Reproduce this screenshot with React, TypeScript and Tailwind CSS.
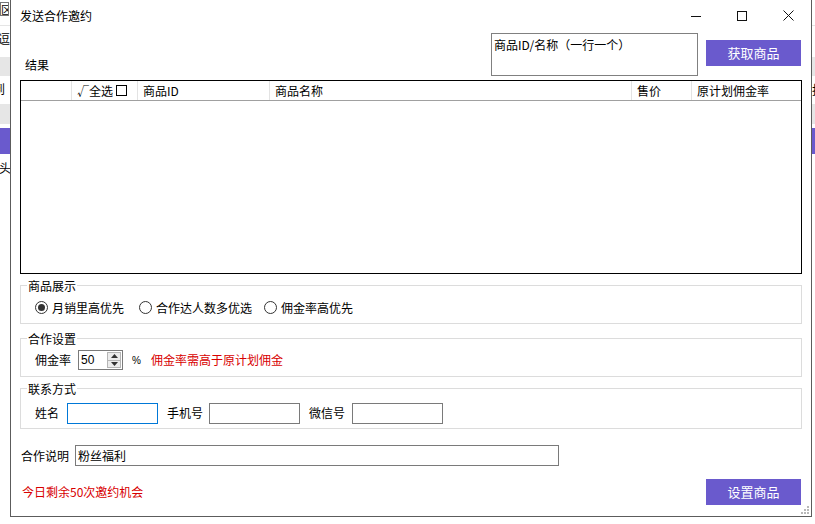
import React from 'react';

const Radio = ({ checked, label, className }: { checked?: boolean; label: string; className?: string }) => (
  <label className={`flex items-center ${className ?? ''}`}>
    <span className="flex items-center justify-center w-[13px] h-[13px] rounded-full border border-[#333333] bg-white">
      {checked && <span className="w-[7px] h-[7px] rounded-full bg-[#333333]" />}
    </span>
    <span className="ml-[4px]">{label}</span>
  </label>
);

const GroupBox = ({ title, className, children }: { title: string; className?: string; children: React.ReactNode }) => (
  <div className={`relative mx-[9px] border border-[#dcdcdc] ${className ?? ''}`}>
    <span className="absolute left-[6px] -top-[8px] px-[1px] bg-white leading-[16px]">{title}</span>
    {children}
  </div>
);

const TextBox = ({ className, value, focused }: { className?: string; value?: string; focused?: boolean }) => (
  <div
    className={`h-[21px] border bg-white pl-[2px] leading-[19px] ${focused ? 'border-[#0078d7]' : 'border-[#7a7a7a]'} ${className ?? ''}`}
  >
    {value}
  </div>
);

const columns = [
  { key: 'blank', label: '', w: 'w-[51px]' },
  { key: 'check', label: '√全选', w: 'w-[66px]' },
  { key: 'id', label: '商品ID', w: 'w-[132px]' },
  { key: 'name', label: '商品名称', w: 'w-[362px]' },
  { key: 'price', label: '售价', w: 'w-[60px]' },
  { key: 'rate', label: '原计划佣金率', w: 'flex-1' },
];

const App = (): JSX.Element => {
  return (
    <div className="relative w-[815px] h-[524px] overflow-hidden bg-white text-[12px] text-black font-['Noto_Sans_CJK_SC','Noto_Sans',sans-serif]">
      {/* window behind the dialog */}
      <div className="absolute left-0 top-[2px] w-[9px] h-[14px] border border-[#777777] text-[11px] leading-[12px] overflow-hidden">区</div>
      <div className="absolute left-0 top-[25px] w-[815px] border-t border-[#e5e5e5]" />
      <span className="absolute -left-[2px] top-[31px] leading-[16px]">逗</span>
      <div className="absolute left-0 top-[57px] w-[815px] h-[19px] bg-[#e6e6e6]" />
      <span className="absolute -left-[7px] top-[81px] leading-[16px]">到</span>
      <span className="absolute left-[812px] top-[82px] leading-[16px]">报</span>
      <div className="absolute left-0 top-[104px] w-[815px] h-[20px] bg-[#e6e6e6]" />
      <div className="absolute left-0 top-[128px] w-[815px] h-[26px] bg-[#6a5acd]" />
      <span className="absolute -left-[1px] top-[160px] leading-[16px]">头</span>

      {/* dialog */}
      <div className="absolute left-[10px] top-0 w-[802px] h-[517px] flex flex-col bg-white border-l border-r border-b border-[#5c5c5c]">
        <div className="flex items-center h-[31px] shrink-0">
          <span className="pl-[9px] leading-[16px]">发送合作邀约</span>
          <div className="ml-auto flex h-full">
            <div className="w-[46px] flex items-center justify-center">
              <svg width="10" height="10" viewBox="0 0 10 10"><path d="M0 5.5h10" stroke="#111" strokeWidth="1" /></svg>
            </div>
            <div className="w-[46px] flex items-center justify-center">
              <svg width="10" height="10" viewBox="0 0 10 10"><rect x="0.5" y="0.5" width="9" height="9" fill="none" stroke="#111" strokeWidth="1" /></svg>
            </div>
            <div className="w-[46px] flex items-center justify-center">
              <svg width="11" height="11" viewBox="0 0 11 11"><path d="M0.5 0.5l10 10M10.5 0.5l-10 10" stroke="#111" strokeWidth="1" /></svg>
            </div>
          </div>
        </div>

        <div className="flex h-[49px] shrink-0">
          <span className="ml-[14px] mt-[26px] leading-[16px]">结果</span>
          <div className="ml-auto mt-[2px] w-[207px] h-[43px] border border-[#808080] pl-[2px] pt-[3px] leading-[16px]">
            商品ID/名称（一行一个）
          </div>
          <button className="ml-[8px] mr-[10px] mt-[9px] w-[95px] h-[26px] bg-[#6a5acd] text-white text-[13px]">
            获取商品
          </button>
        </div>

        <div className="mx-[9px] h-[194px] shrink-0 border border-black flex flex-col">
          <div className="flex h-[20px] border-b border-[#a0a0a0]">
            {columns.map((c) => (
              <div key={c.key} className={`${c.w} flex items-center pl-[5px] border-r border-[#e3e3e3] last:border-r-0`}>
                {c.label}
                {c.key === 'check' && <span className="ml-[3px] w-[11px] h-[11px] border border-black" />}
              </div>
            ))}
          </div>
        </div>

        <GroupBox title="商品展示" className="mt-[11px] h-[39px] shrink-0">
          <div className="flex items-center h-full pt-[6px]">
            <Radio checked label="月销里高优先" className="ml-[14px]" />
            <Radio label="合作达人数多优选" className="ml-[15px]" />
            <Radio label="佣金率高优先" className="ml-[12px]" />
          </div>
        </GroupBox>

        <GroupBox title="合作设置" className="mt-[14px] h-[39px] shrink-0">
          <div className="flex items-center h-full pt-[5px]">
            <span className="ml-[14px]">佣金率</span>
            <div className="ml-[7px] w-[45px] h-[20px] border border-[#7a7a7a] flex">
              <span className="pl-[2px] leading-[18px] text-[12px] font-['Liberation_Sans',sans-serif]">50</span>
              <div className="ml-auto mr-[1px] my-[1px] w-[14px] flex flex-col border border-[#b5b5b5] bg-[#ececec]">
                <div className="flex-1 flex items-center justify-center border-b border-[#b5b5b5]">
                  <svg width="7" height="4" viewBox="0 0 7 4"><path d="M0 4L3.5 0L7 4Z" fill="#333" /></svg>
                </div>
                <div className="flex-1 flex items-center justify-center">
                  <svg width="7" height="4" viewBox="0 0 7 4"><path d="M0 0L3.5 4L7 0Z" fill="#333" /></svg>
                </div>
              </div>
            </div>
            <span className="ml-[9px] text-[10px] font-['Liberation_Sans',sans-serif]">%</span>
            <span className="ml-[10px] text-[#d80000]">佣金率需高于原计划佣金</span>
          </div>
        </GroupBox>

        <GroupBox title="联系方式" className="mt-[11px] h-[41px] shrink-0">
          <div className="flex items-center h-full pt-[9px]">
            <span className="ml-[14px]">姓名</span>
            <TextBox className="ml-[8px] w-[91px]" focused />
            <span className="ml-[9px]">手机号</span>
            <TextBox className="ml-[6px] w-[91px]" />
            <span className="ml-[9px]">微信号</span>
            <TextBox className="ml-[7px] w-[91px]" />
          </div>
        </GroupBox>

        <div className="flex items-center mt-[16px] h-[21px] shrink-0">
          <span className="ml-[10px]">合作说明</span>
          <TextBox className="ml-[6px] w-[484px]" value="粉丝福利" />
        </div>

        <div className="flex items-center mt-[13px] h-[26px] shrink-0">
          <span className="ml-[11px] text-[#d80000]">今日剩余50次邀约机会</span>
          <button className="ml-auto mr-[10px] w-[95px] h-[26px] bg-[#6a5acd] text-white text-[13px]">
            设置商品
          </button>
        </div>

        <div className="flex justify-end mt-auto mr-[1px] mb-[1px]">
          <svg width="10" height="10" viewBox="0 0 10 10">
            <rect x="7" y="1" width="2" height="2" fill="#b8b8b8" />
            <rect x="4" y="4" width="2" height="2" fill="#b8b8b8" />
            <rect x="7" y="4" width="2" height="2" fill="#b8b8b8" />
            <rect x="1" y="7" width="2" height="2" fill="#b8b8b8" />
            <rect x="4" y="7" width="2" height="2" fill="#b8b8b8" />
            <rect x="7" y="7" width="2" height="2" fill="#b8b8b8" />
          </svg>
        </div>
      </div>
    </div>
  );
};

export default App;
